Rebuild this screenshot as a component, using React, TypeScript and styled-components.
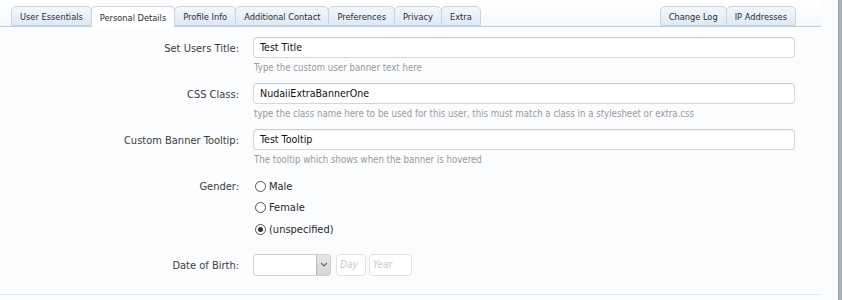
import React from "react";
import styled, { createGlobalStyle } from "styled-components";

const FONT = `"DejaVu Sans Condensed", "DejaVu Sans", sans-serif`;

const GlobalStyle = createGlobalStyle`
  html, body { margin: 0; padding: 0; background: #fbfcfe; }
  body { font-family: ${FONT}; font-stretch: condensed; }
  * { box-sizing: border-box; }
`;

const Page = styled.div`
  display: flex;
  width: 842px;
  height: 300px;
  overflow: hidden;
  background: #fbfcfe;
`;

const Main = styled.div`
  width: 821px;
  display: flex;
  flex-direction: column;
`;

const Edge = styled.div`
  margin-left: 17px;
  width: 4px;
  background: linear-gradient(to right, #8f979f, #b4bbc2 50%, #9aa2aa);
`;

const TabBar = styled.div`
  display: flex;
  justify-content: space-between;
  align-items: flex-end;
  height: 27px;
  padding: 0 25px 0 12px;
  border-bottom: 1px solid #b9cfe2;
  background: linear-gradient(to bottom, #ffffff, #f5f8fb);
`;

const TabGroup = styled.div`
  display: flex;
  align-items: flex-end;
`;

const Tab = styled.div<{ $active?: boolean }>`
  height: ${(p) => (p.$active ? "21px" : "20px")};
  margin-bottom: ${(p) => (p.$active ? "-1px" : "0")};
  padding: 0 8px;
  display: flex;
  align-items: center;
  font-size: 9.2px;
  color: #262d36;
  border: 1px solid #c3d5e6;
  border-bottom: ${(p) => (p.$active ? "none" : "1px solid #c3d5e6")};
  border-radius: 5px 5px 0 0;
  margin-left: -1px;
  background: ${(p) =>
    p.$active ? "#ffffff" : "linear-gradient(to bottom, #f3f7fb, #dfe9f3)"};
  white-space: nowrap;
`;

const Form = styled.div`
  display: flex;
  flex-direction: column;
  padding-top: 10px;
`;

const Row = styled.div<{ $top?: number }>`
  display: grid;
  grid-template-columns: 239px 542px;
  column-gap: 14px;
  margin-top: ${(p) => p.$top ?? 0}px;
`;

const Label = styled.div`
  text-align: right;
  font-size: 11px;
  line-height: 21px;
  padding-top: 1px;
  color: #3d3d3d;
  white-space: nowrap;
`;

const Field = styled.div`
  display: flex;
  flex-direction: column;
`;

const TextInput = styled.div`
  height: 21px;
  border: 1px solid #d6d6d6;
  border-top-color: #cfcfcf;
  border-radius: 4px;
  background: #ffffff;
  box-shadow: inset 0 1px 1px rgba(0, 0, 0, 0.05);
  padding: 0 6px;
  font-size: 10.6px;
  line-height: 19px;
  color: #111;
`;

const Hint = styled.div`
  margin: 3px 0 8px;
  font-size: 9.6px;
  line-height: 14px;
  color: #9a9a9a;
  padding-left: 1px;
  white-space: nowrap;
`;

const RadioList = styled.div`
  display: flex;
  flex-direction: column;
`;

const RadioRow = styled.div`
  height: 21.5px;
  display: flex;
  align-items: center;
  gap: 3px;
  padding-left: 2px;
  padding-top: 1px;
  font-size: 11px;
  color: #2a2a2a;
`;

const RadioCircle = styled.span<{ $checked?: boolean }>`
  width: 11px;
  height: 11px;
  border-radius: 50%;
  border: 1px solid #555;
  background: #fff;
  display: inline-flex;
  align-items: center;
  justify-content: center;
  &::after {
    content: "";
    width: 5px;
    height: 5px;
    border-radius: 50%;
    background: ${(p) => (p.$checked ? "#333" : "transparent")};
  }
`;

const DateRow = styled.div`
  display: flex;
  align-items: center;
  height: 22px;
`;

const Select = styled.div`
  width: 78px;
  height: 22px;
  display: flex;
  border: 1px solid #d0d0d0;
  border-radius: 3px;
  background: #fff;
  overflow: hidden;
`;

const SelectValue = styled.div`
  flex: 1;
`;

const SelectButton = styled.div`
  width: 14px;
  border-left: 1px solid #b8b8b8;
  background: linear-gradient(to bottom, #e6e6e6, #d6d6d6);
  display: flex;
  align-items: center;
  justify-content: center;
`;

const SmallBox = styled.div<{ $w: number; $ml: number }>`
  width: ${(p) => p.$w}px;
  margin-left: ${(p) => p.$ml}px;
  height: 22px;
  border: 1px solid #e2e2e2;
  border-radius: 4px;
  background: #fff;
  padding: 0 3px;
  font-size: 10px;
  line-height: 20px;
  font-style: italic;
  color: #c9c9c9;
`;

const Footer = styled.div`
  margin-top: 18px;
  border-top: 1px solid #dbe7ee;
`;

const tabs = [
  "User Essentials",
  "Personal Details",
  "Profile Info",
  "Additional Contact",
  "Preferences",
  "Privacy",
  "Extra",
];

const fields = [
  {
    label: "Set Users Title:",
    value: "Test Title",
    hint: "Type the custom user banner text here",
  },
  {
    label: "CSS Class:",
    value: "NudaiiExtraBannerOne",
    hint: "type the class name here to be used for this user, this must match a class in a stylesheet or extra.css",
  },
  {
    label: "Custom Banner Tooltip:",
    value: "Test Tooltip",
    hint: "The tooltip which shows when the banner is hovered",
  },
];

const genders = [
  { text: "Male", checked: false },
  { text: "Female", checked: false },
  { text: "(unspecified)", checked: true },
];

export default function App() {
  return (
    <>
      <GlobalStyle />
      <Page>
        <Main>
          <TabBar>
            <TabGroup>
              {tabs.map((t) => (
                <Tab key={t} $active={t === "Personal Details"}>
                  {t}
                </Tab>
              ))}
            </TabGroup>
            <TabGroup>
              <Tab>Change Log</Tab>
              <Tab>IP Addresses</Tab>
            </TabGroup>
          </TabBar>
          <Form>
            {fields.map((f) => (
              <Row key={f.label}>
                <Label>{f.label}</Label>
                <Field>
                  <TextInput>{f.value}</TextInput>
                  <Hint>{f.hint}</Hint>
                </Field>
              </Row>
            ))}
            <Row>
              <Label>Gender:</Label>
              <RadioList>
                {genders.map((g) => (
                  <RadioRow key={g.text}>
                    <RadioCircle $checked={g.checked} />
                    {g.text}
                  </RadioRow>
                ))}
              </RadioList>
            </Row>
            <Row $top={14}>
              <Label>Date of Birth:</Label>
              <DateRow>
                <Select>
                  <SelectValue />
                  <SelectButton>
                    <svg width="8" height="5" viewBox="0 0 8 5">
                      <path d="M1 1 L4 4 L7 1" fill="none" stroke="#666" strokeWidth="1.1" />
                    </svg>
                  </SelectButton>
                </Select>
                <SmallBox $w={30} $ml={5}>Day</SmallBox>
                <SmallBox $w={43} $ml={3}>Year</SmallBox>
              </DateRow>
            </Row>
          </Form>
          <Footer />
        </Main>
        <Edge />
      </Page>
    </>
  );
}
